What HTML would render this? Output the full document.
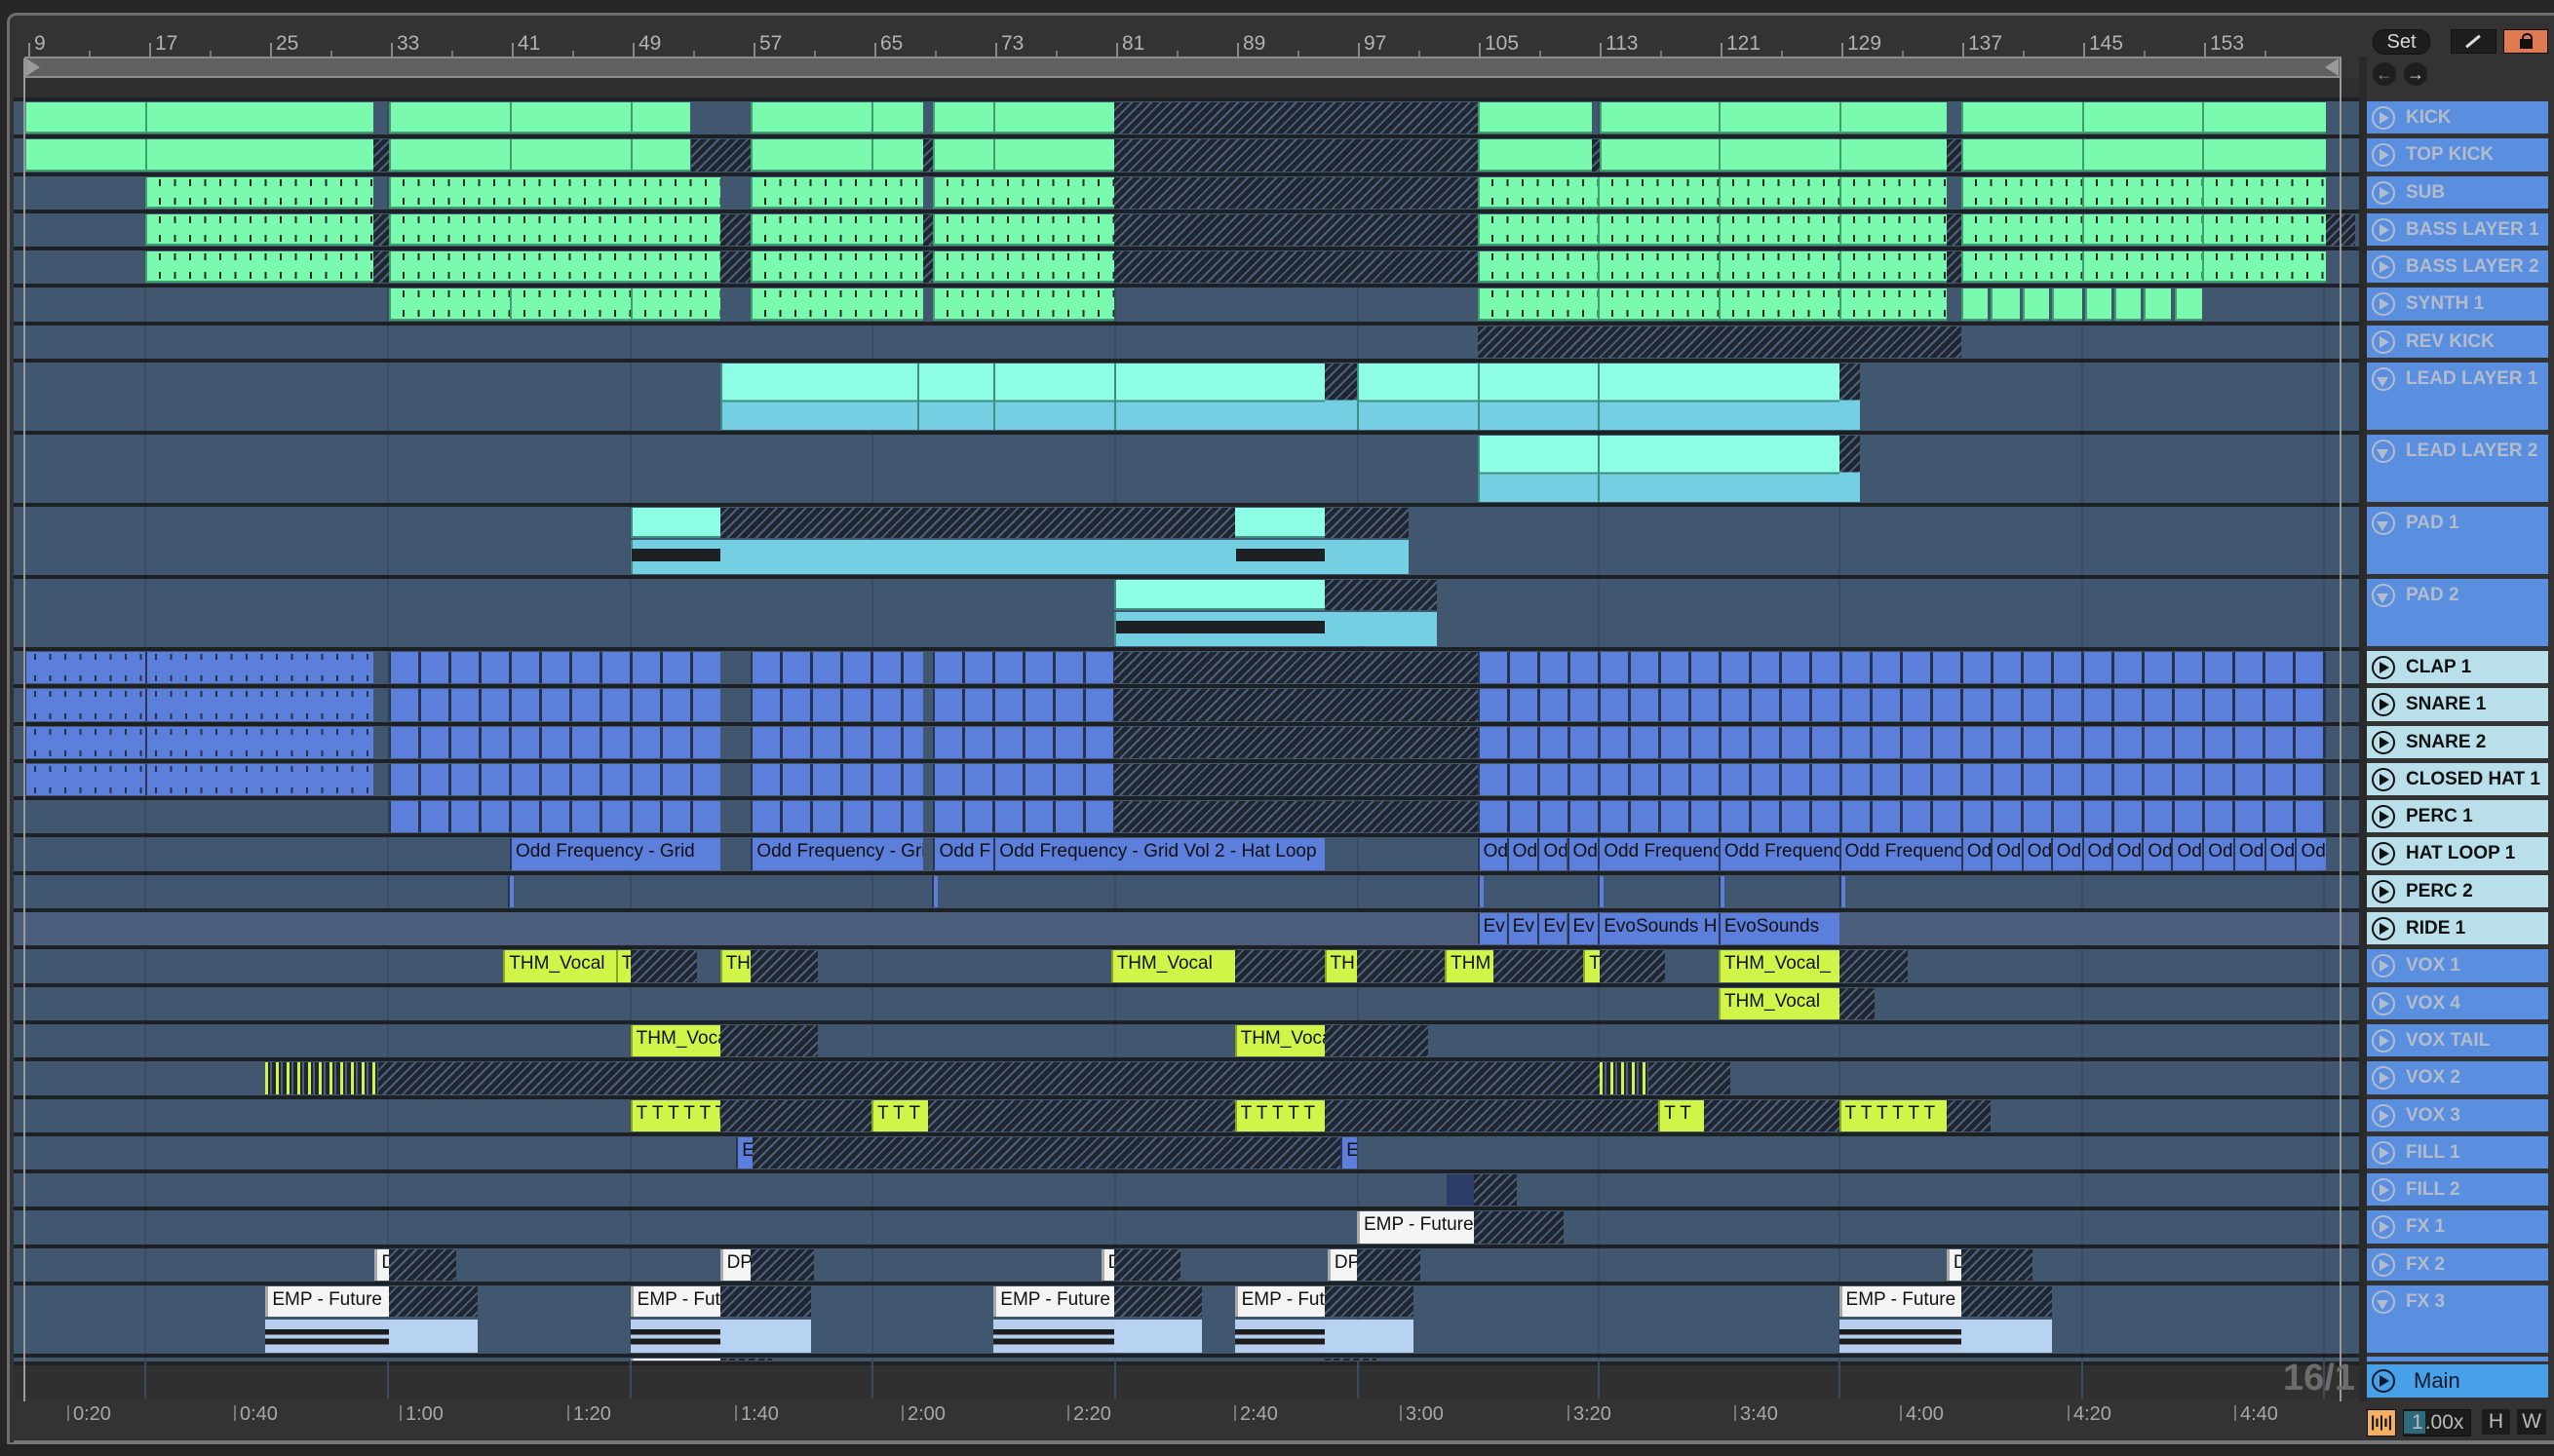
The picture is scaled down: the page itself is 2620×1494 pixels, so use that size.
<!DOCTYPE html>
<html><head><meta charset="utf-8">
<style>
*{margin:0;padding:0}
body{width:2620px;height:1494px;background:#272727;position:relative;overflow:hidden;font-family:"Liberation Sans",sans-serif}
i{font-style:normal}
.abs{position:absolute}
.frame{left:7px;top:13px;width:2640px;height:1470px;border:3px solid #6e6e6e;border-radius:10px 0 0 0;background:#333;box-sizing:border-box}
.rl{position:absolute;top:33px;font-size:21px;color:#b2b2b2;font-family:"Liberation Sans Narrow","Liberation Sans",sans-serif}
.tk{position:absolute;top:44px;width:2px;height:14px;background:#8a8a8a}
.tk2{position:absolute;top:52px;width:2px;height:6px;background:#7a7a7a}
.loop{left:25px;top:58px;width:2377px;height:22px;background:#606060;border:2px solid #8d8d8d;box-sizing:border-box}
.strip{left:25px;top:80px;width:2395px;height:20px;background:#2f2f2f}
.area{left:14px;top:100px;width:2406px;height:1297px;background:#41566f}
.r{position:absolute;left:14px;width:2406px;border-top:4px solid #1e2124;box-sizing:border-box}
.vl{position:absolute;top:100px;width:2px;height:1335px;background:#3a4b62}
.c{position:absolute;top:1px;bottom:1px;left:calc(var(--x)*1.671px - 14px);width:calc((var(--e) - var(--x))*1.671px);box-sizing:border-box;overflow:hidden;white-space:nowrap;font-size:19px;line-height:28px;color:#111;padding-left:4px;font-family:"Liberation Sans Narrow","Liberation Sans",sans-serif}
.g{background-color:#7afaae;border-left:2px solid #3f9f6f;border-bottom:2px solid #3f9f6f}
.t{background-image:repeating-linear-gradient(90deg,#1a2a20 0 2px,transparent 2px 15.5px),repeating-linear-gradient(90deg,#1a2a20 0 2px,transparent 2px 15.5px);background-size:100% 7px,100% 7px;background-position:12px 2px,12px calc(100% - 2px);background-repeat:no-repeat}
.h{background:repeating-linear-gradient(135deg,#21262e 0 5px,#4a6080 5px 7px)}
.cy{background:linear-gradient(#8dfde6 0 55%,#3f8f80 55%,#3f8f80 calc(55% + 2px),#74cfe2 calc(55% + 2px));border-left:2px solid #3f8f80}
.hcy{background:linear-gradient(transparent 0 55%,#74cfe2 55%),repeating-linear-gradient(135deg,#21262e 0 5px,#4a6080 5px 7px)}
.b{background-color:#5d7fdc;border-left:2px solid #2a3550}
.bc{background-image:repeating-linear-gradient(90deg,transparent 0 28px,#26314d 28px 31px)}
.bt{background-image:repeating-linear-gradient(90deg,#26314d 0 2px,transparent 2px 15.5px),repeating-linear-gradient(90deg,#26314d 0 2px,transparent 2px 15.5px);background-size:100% 6px,100% 6px;background-position:8px 2px,8px calc(100% - 2px);background-repeat:no-repeat}
.y{background:#d0f548;border-left:2px solid #8aa520}
.yt{background:repeating-linear-gradient(90deg,#d0f548 0 3px,#22272f 3px 5px,#4a6080 5px 7px,#22272f 7px 11px)}
.w{background:#f4f4f4;border-left:3px solid #aaa}
.hd{position:absolute;left:2428px;width:186px;box-sizing:border-box;font-weight:bold;font-size:19px;color:#b4bccc;background:#5a8fe0;padding-left:40px;line-height:34px;white-space:nowrap;overflow:hidden}
.hd::before{content:"";position:absolute;left:5px;top:5px;width:20px;height:20px;border:2px solid currentColor;border-radius:50%}
.hd::after{content:"";position:absolute;left:13px;top:11px;border-left:10px solid currentColor;border-top:6px solid transparent;border-bottom:6px solid transparent}
.hd.dn::after{left:10px;top:15px;border-top:10px solid currentColor;border-left:6px solid transparent;border-right:6px solid transparent;border-bottom:0}
.lt{background:#b8dfea;color:#111}
.tm{position:absolute;top:1440px;font-size:20px;color:#a8a8a8}
.tm::before{content:"";position:absolute;left:-6px;top:2px;width:2px;height:16px;background:#777}
</style></head><body>
<div class="abs frame"></div>
<div class="tk" style="left:29px"></div><div class="rl" style="left:35px">9</div>
<div class="tk" style="left:153px"></div><div class="rl" style="left:159px">17</div>
<div class="tk" style="left:277px"></div><div class="rl" style="left:283px">25</div>
<div class="tk" style="left:401px"></div><div class="rl" style="left:407px">33</div>
<div class="tk" style="left:525px"></div><div class="rl" style="left:531px">41</div>
<div class="tk" style="left:649px"></div><div class="rl" style="left:655px">49</div>
<div class="tk" style="left:773px"></div><div class="rl" style="left:779px">57</div>
<div class="tk" style="left:897px"></div><div class="rl" style="left:903px">65</div>
<div class="tk" style="left:1021px"></div><div class="rl" style="left:1027px">73</div>
<div class="tk" style="left:1145px"></div><div class="rl" style="left:1151px">81</div>
<div class="tk" style="left:1269px"></div><div class="rl" style="left:1275px">89</div>
<div class="tk" style="left:1393px"></div><div class="rl" style="left:1399px">97</div>
<div class="tk" style="left:1517px"></div><div class="rl" style="left:1523px">105</div>
<div class="tk" style="left:1641px"></div><div class="rl" style="left:1647px">113</div>
<div class="tk" style="left:1765px"></div><div class="rl" style="left:1771px">121</div>
<div class="tk" style="left:1889px"></div><div class="rl" style="left:1895px">129</div>
<div class="tk" style="left:2013px"></div><div class="rl" style="left:2019px">137</div>
<div class="tk" style="left:2137px"></div><div class="rl" style="left:2143px">145</div>
<div class="tk" style="left:2261px"></div><div class="rl" style="left:2267px">153</div>
<div class="tk2" style="left:91px"></div><div class="tk2" style="left:215px"></div><div class="tk2" style="left:339px"></div><div class="tk2" style="left:463px"></div><div class="tk2" style="left:587px"></div><div class="tk2" style="left:711px"></div><div class="tk2" style="left:835px"></div><div class="tk2" style="left:959px"></div><div class="tk2" style="left:1083px"></div><div class="tk2" style="left:1207px"></div><div class="tk2" style="left:1331px"></div><div class="tk2" style="left:1455px"></div><div class="tk2" style="left:1579px"></div><div class="tk2" style="left:1703px"></div><div class="tk2" style="left:1827px"></div><div class="tk2" style="left:1951px"></div><div class="tk2" style="left:2075px"></div><div class="tk2" style="left:2199px"></div><div class="tk2" style="left:2323px"></div>
<div class="abs loop"></div>
<div class="abs" style="left:27px;top:60px;border-left:14px solid #9a9a9a;border-top:9px solid transparent;border-bottom:9px solid transparent"></div>
<div class="abs" style="left:2385px;top:60px;border-right:14px solid #9a9a9a;border-top:9px solid transparent;border-bottom:9px solid transparent"></div>
<div class="abs strip"></div>
<div class="abs" style="left:2420px;top:58px;width:8px;height:1380px;background:#2a2a2a"></div>
<div class="abs area"></div>
<div class="abs" style="left:14px;top:1397px;width:2406px;height:38px;background:#303030;border-top:4px solid #222;box-sizing:border-box"></div>
<div class="vl" style="left:148px"></div><div class="vl" style="left:397px"></div><div class="vl" style="left:646px"></div><div class="vl" style="left:894px"></div><div class="vl" style="left:1143px"></div><div class="vl" style="left:1392px"></div><div class="vl" style="left:1639px"></div><div class="vl" style="left:1886px"></div><div class="vl" style="left:2135px"></div><div class="vl" style="left:2383px"></div>

<div class="r" style="top:100px;height:38px">
<i class="c g" style="--x:15;--e:89"></i><i class="c g" style="--x:89;--e:229"></i><i class="c g" style="--x:239;--e:313"></i><i class="c g" style="--x:313;--e:387"></i><i class="c g" style="--x:387;--e:424"></i><i class="c g" style="--x:461;--e:535"></i><i class="c g" style="--x:535;--e:567"></i><i class="c g" style="--x:573;--e:610"></i><i class="c g" style="--x:610;--e:684"></i><i class="c h" style="--x:684;--e:907"></i><i class="c g" style="--x:907;--e:977"></i><i class="c g" style="--x:982;--e:1055"></i><i class="c g" style="--x:1055;--e:1129"></i><i class="c g" style="--x:1129;--e:1195"></i><i class="c g" style="--x:1204;--e:1278"></i><i class="c g" style="--x:1278;--e:1352"></i><i class="c g" style="--x:1352;--e:1428"></i>
</div>
<div class="r" style="top:138px;height:39px">
<i class="c g" style="--x:15;--e:89"></i><i class="c g" style="--x:89;--e:229"></i><i class="c h" style="--x:229;--e:239"></i><i class="c g" style="--x:239;--e:313"></i><i class="c g" style="--x:313;--e:387"></i><i class="c g" style="--x:387;--e:424"></i><i class="c h" style="--x:424;--e:461"></i><i class="c g" style="--x:461;--e:535"></i><i class="c g" style="--x:535;--e:567"></i><i class="c h" style="--x:567;--e:573"></i><i class="c g" style="--x:573;--e:610"></i><i class="c g" style="--x:610;--e:684"></i><i class="c h" style="--x:684;--e:907"></i><i class="c g" style="--x:907;--e:977"></i><i class="c h" style="--x:977;--e:982"></i><i class="c g" style="--x:982;--e:1055"></i><i class="c g" style="--x:1055;--e:1129"></i><i class="c g" style="--x:1129;--e:1195"></i><i class="c h" style="--x:1195;--e:1204"></i><i class="c g" style="--x:1204;--e:1278"></i><i class="c g" style="--x:1278;--e:1352"></i><i class="c g" style="--x:1352;--e:1428"></i>
</div>
<div class="r" style="top:177px;height:38px">
<i class="c g t" style="--x:89;--e:229"></i><i class="c g t" style="--x:239;--e:442"></i><i class="c g t" style="--x:461;--e:567"></i><i class="c g t" style="--x:573;--e:684"></i><i class="c h" style="--x:684;--e:907"></i><i class="c g t" style="--x:907;--e:981"></i><i class="c g t" style="--x:981;--e:1055"></i><i class="c g t" style="--x:1055;--e:1129"></i><i class="c g t" style="--x:1129;--e:1195"></i><i class="c g t" style="--x:1204;--e:1278"></i><i class="c g t" style="--x:1278;--e:1352"></i><i class="c g t" style="--x:1352;--e:1428"></i>
</div>
<div class="r" style="top:215px;height:38px">
<i class="c g t" style="--x:89;--e:229"></i><i class="c h" style="--x:229;--e:239"></i><i class="c g t" style="--x:239;--e:442"></i><i class="c h" style="--x:442;--e:461"></i><i class="c g t" style="--x:461;--e:567"></i><i class="c h" style="--x:567;--e:573"></i><i class="c g t" style="--x:573;--e:684"></i><i class="c h" style="--x:684;--e:907"></i><i class="c g t" style="--x:907;--e:981"></i><i class="c g t" style="--x:981;--e:1055"></i><i class="c g t" style="--x:1055;--e:1129"></i><i class="c g t" style="--x:1129;--e:1195"></i><i class="c h" style="--x:1195;--e:1204"></i><i class="c g t" style="--x:1204;--e:1278"></i><i class="c g t" style="--x:1278;--e:1352"></i><i class="c g t" style="--x:1352;--e:1428"></i><i class="c h" style="--x:1428;--e:1446"></i>
</div>
<div class="r" style="top:253px;height:38px">
<i class="c g t" style="--x:89;--e:229"></i><i class="c h" style="--x:229;--e:239"></i><i class="c g t" style="--x:239;--e:442"></i><i class="c h" style="--x:442;--e:461"></i><i class="c g t" style="--x:461;--e:567"></i><i class="c h" style="--x:567;--e:573"></i><i class="c g t" style="--x:573;--e:684"></i><i class="c h" style="--x:684;--e:907"></i><i class="c g t" style="--x:907;--e:981"></i><i class="c g t" style="--x:981;--e:1055"></i><i class="c g t" style="--x:1055;--e:1129"></i><i class="c g t" style="--x:1129;--e:1195"></i><i class="c h" style="--x:1195;--e:1204"></i><i class="c g t" style="--x:1204;--e:1278"></i><i class="c g t" style="--x:1278;--e:1352"></i><i class="c g t" style="--x:1352;--e:1428"></i>
</div>
<div class="r" style="top:291px;height:39px">
<i class="c g t" style="--x:239;--e:313"></i><i class="c g t" style="--x:313;--e:387"></i><i class="c g t" style="--x:387;--e:442"></i><i class="c g t" style="--x:461;--e:567"></i><i class="c g t" style="--x:573;--e:684"></i><i class="c g t" style="--x:907;--e:981"></i><i class="c g t" style="--x:981;--e:1055"></i><i class="c g t" style="--x:1055;--e:1129"></i><i class="c g t" style="--x:1129;--e:1195"></i><i class="c g" style="--x:1204;--e:1220"></i><i class="c g" style="--x:1222;--e:1240"></i><i class="c g" style="--x:1242;--e:1258"></i><i class="c g" style="--x:1260;--e:1278"></i><i class="c g" style="--x:1280;--e:1296"></i><i class="c g" style="--x:1298;--e:1314"></i><i class="c g" style="--x:1316;--e:1333"></i><i class="c g" style="--x:1335;--e:1352"></i>
</div>
<div class="r" style="top:330px;height:38px"><i class="c h" style="--x:907;--e:1204"></i></div>
<div class="r" style="top:368px;height:74px">
<i class="c cy" style="--x:442;--e:563"></i><i class="c cy" style="--x:563;--e:610"></i><i class="c cy" style="--x:610;--e:684"></i><i class="c cy" style="--x:684;--e:813"></i><i class="c hcy" style="--x:813;--e:833"></i><i class="c cy" style="--x:833;--e:907"></i><i class="c cy" style="--x:907;--e:981"></i><i class="c cy" style="--x:981;--e:1129"></i><i class="c hcy" style="--x:1129;--e:1142"></i>
</div>
<div class="r" style="top:442px;height:74px">
<i class="c cy" style="--x:907;--e:981"></i><i class="c cy" style="--x:981;--e:1129"></i><i class="c hcy" style="--x:1129;--e:1142"></i>
</div>
<div class="r" style="top:516px;height:74px">
<i class="c" style="--x:387;--e:865;top:34px;background:#74cfe2;border-left:2px solid #3f8f80"></i>
<i class="c" style="--x:387;--e:442;bottom:38px;background:#8dfde6;border-left:2px solid #3f8f80;border-bottom:2px solid #3f8f80"></i>
<i class="c h" style="--x:442;--e:758;bottom:38px"></i>
<i class="c" style="--x:758;--e:813;bottom:38px;background:#8dfde6;border-bottom:2px solid #3f8f80"></i>
<i class="c h" style="--x:813;--e:865;bottom:38px"></i>
<i class="c" style="--x:388;--e:442;top:43px;bottom:14px;background:#1d2124"></i>
<i class="c" style="--x:759;--e:813;top:43px;bottom:14px;background:#1d2124"></i>
</div>
<div class="r" style="top:590px;height:74px">
<i class="c" style="--x:684;--e:882;top:34px;background:#74cfe2;border-left:2px solid #3f8f80"></i>
<i class="c" style="--x:684;--e:813;bottom:38px;background:#8dfde6;border-left:2px solid #3f8f80;border-bottom:2px solid #3f8f80"></i>
<i class="c h" style="--x:813;--e:882;bottom:38px"></i>
<i class="c" style="--x:685;--e:813;top:43px;bottom:14px;background:#1d2124"></i>
</div>
<div class="r" style="top:664px;height:38px">
<i class="c b bt" style="--x:15;--e:89"></i><i class="c b bt" style="--x:89;--e:229"></i><i class="c b bc" style="--x:239;--e:442"></i><i class="c b bc" style="--x:461;--e:567"></i><i class="c b bc" style="--x:573;--e:684"></i><i class="c h" style="--x:684;--e:907"></i><i class="c b bc" style="--x:907;--e:1428"></i>
</div>
<div class="r" style="top:702px;height:39px">
<i class="c b bt" style="--x:15;--e:89"></i><i class="c b bt" style="--x:89;--e:229"></i><i class="c b bc" style="--x:239;--e:442"></i><i class="c b bc" style="--x:461;--e:567"></i><i class="c b bc" style="--x:573;--e:684"></i><i class="c h" style="--x:684;--e:907"></i><i class="c b bc" style="--x:907;--e:1428"></i>
</div>
<div class="r" style="top:741px;height:38px">
<i class="c b bt" style="--x:15;--e:89"></i><i class="c b bt" style="--x:89;--e:229"></i><i class="c b bc" style="--x:239;--e:442"></i><i class="c b bc" style="--x:461;--e:567"></i><i class="c b bc" style="--x:573;--e:684"></i><i class="c h" style="--x:684;--e:907"></i><i class="c b bc" style="--x:907;--e:1428"></i>
</div>
<div class="r" style="top:779px;height:38px">
<i class="c b bt" style="--x:15;--e:89"></i><i class="c b bt" style="--x:89;--e:229"></i><i class="c b bc" style="--x:239;--e:442"></i><i class="c b bc" style="--x:461;--e:567"></i><i class="c b bc" style="--x:573;--e:684"></i><i class="c h" style="--x:684;--e:907"></i><i class="c b bc" style="--x:907;--e:1428"></i>
</div>
<div class="r" style="top:817px;height:38px">
<i class="c b bc" style="--x:239;--e:442"></i><i class="c b bc" style="--x:461;--e:567"></i><i class="c b bc" style="--x:573;--e:684"></i><i class="c h" style="--x:684;--e:907"></i><i class="c b bc" style="--x:907;--e:1428"></i>
</div>
<div class="r" style="top:855px;height:39px">
<i class="c b" style="--x:313;--e:442">Odd Frequency - Grid</i><i class="c b" style="--x:461;--e:567">Odd Frequency - Grid</i><i class="c b" style="--x:573;--e:610">Odd F</i><i class="c b" style="--x:610;--e:813">Odd Frequency - Grid Vol 2 - Hat Loop</i>
<i class="c b" style="--x:907;--e:925">Od</i><i class="c b" style="--x:925;--e:944">Od</i><i class="c b" style="--x:944;--e:962">Od</i><i class="c b" style="--x:962;--e:981">Od</i>
<i class="c b" style="--x:981;--e:1055">Odd Frequency</i><i class="c b" style="--x:1055;--e:1129">Odd Frequency</i><i class="c b" style="--x:1129;--e:1204">Odd Frequency</i>
<i class="c b" style="--x:1204;--e:1222">Od</i><i class="c b" style="--x:1222;--e:1241">Od</i><i class="c b" style="--x:1241;--e:1259">Od</i><i class="c b" style="--x:1259;--e:1278">Od</i><i class="c b" style="--x:1278;--e:1296">Od</i><i class="c b" style="--x:1296;--e:1315">Od</i><i class="c b" style="--x:1315;--e:1333">Od</i><i class="c b" style="--x:1333;--e:1352">Od</i><i class="c b" style="--x:1352;--e:1371">Od</i><i class="c b" style="--x:1371;--e:1390">Od</i><i class="c b" style="--x:1390;--e:1409">Od</i><i class="c b" style="--x:1409;--e:1428">Od</i>
</div>
<div class="r" style="top:894px;height:38px">
<i class="c b" style="--x:312;--e:314"></i><i class="c b" style="--x:572;--e:574"></i><i class="c b" style="--x:907;--e:909"></i><i class="c b" style="--x:981;--e:983"></i><i class="c b" style="--x:1055;--e:1057"></i><i class="c b" style="--x:1129;--e:1131"></i>
</div>
<div class="r" style="top:932px;height:38px;background:#4a5e7b">
<i class="c b" style="--x:907;--e:925">Ev</i><i class="c b" style="--x:925;--e:944">Ev</i><i class="c b" style="--x:944;--e:962">Ev</i><i class="c b" style="--x:962;--e:981">Ev</i><i class="c b" style="--x:981;--e:1055">EvoSounds H</i><i class="c b" style="--x:1055;--e:1129">EvoSounds</i>
</div>
<div class="r" style="top:970px;height:39px">
<i class="c y" style="--x:309;--e:378">THM_Vocal</i><i class="c y" style="--x:378;--e:387">T</i><i class="c h" style="--x:387;--e:428"></i><i class="c y" style="--x:442;--e:461">TH</i><i class="c h" style="--x:461;--e:502"></i><i class="c y" style="--x:682;--e:758">THM_Vocal</i><i class="c h" style="--x:758;--e:813"></i><i class="c y" style="--x:813;--e:833">TH</i><i class="c h" style="--x:833;--e:887"></i><i class="c y" style="--x:887;--e:917">THM</i><i class="c h" style="--x:917;--e:972"></i><i class="c y" style="--x:972;--e:982">T</i><i class="c h" style="--x:982;--e:1022"></i><i class="c y" style="--x:1055;--e:1129">THM_Vocal_</i><i class="c h" style="--x:1129;--e:1171"></i>
</div>
<div class="r" style="top:1009px;height:38px"><i class="c y" style="--x:1055;--e:1129">THM_Vocal</i><i class="c h" style="--x:1129;--e:1151"></i></div>
<div class="r" style="top:1047px;height:38px"><i class="c y" style="--x:387;--e:442">THM_Vocal</i><i class="c h" style="--x:442;--e:502"></i><i class="c y" style="--x:758;--e:813">THM_Vocal</i><i class="c h" style="--x:813;--e:877"></i></div>
<div class="r" style="top:1085px;height:39px"><i class="c yt" style="--x:163;--e:232"></i><i class="c h" style="--x:232;--e:982"></i><i class="c yt" style="--x:982;--e:1012"></i><i class="c h" style="--x:1012;--e:1062"></i></div>
<div class="r" style="top:1124px;height:38px"><i class="c y" style="--x:387;--e:442">T T T T T T</i><i class="c h" style="--x:442;--e:535"></i><i class="c y" style="--x:535;--e:570">T T T</i><i class="c h" style="--x:570;--e:758"></i><i class="c y" style="--x:758;--e:813">T T T T T</i><i class="c h" style="--x:813;--e:1018"></i><i class="c y" style="--x:1018;--e:1046">T T</i><i class="c h" style="--x:1046;--e:1129"></i><i class="c y" style="--x:1129;--e:1195">T T T T T T</i><i class="c h" style="--x:1195;--e:1222"></i></div>
<div class="r" style="top:1162px;height:38px"><i class="c b" style="--x:452;--e:462">E</i><i class="c h" style="--x:462;--e:823"></i><i class="c b" style="--x:823;--e:833">E</i></div>
<div class="r" style="top:1200px;height:38px"><i class="c" style="--x:888;--e:905;background:#2d3c66"></i><i class="c h" style="--x:905;--e:931"></i></div>
<div class="r" style="top:1238px;height:39px"><i class="c w" style="--x:833;--e:905">EMP - Future</i><i class="c h" style="--x:905;--e:960"></i></div>
<div class="r" style="top:1277px;height:38px"><i class="c w" style="--x:230;--e:239">D</i><i class="c h" style="--x:239;--e:280"></i><i class="c w" style="--x:442;--e:461">DP</i><i class="c h" style="--x:461;--e:500"></i><i class="c w" style="--x:676;--e:684">D</i><i class="c h" style="--x:684;--e:725"></i><i class="c w" style="--x:815;--e:833">DP</i><i class="c h" style="--x:833;--e:872"></i><i class="c w" style="--x:1195;--e:1204">D</i><i class="c h" style="--x:1204;--e:1248"></i></div>
<div class="r" style="top:1315px;height:74px">
<i class="c w" style="--x:163;--e:239;bottom:38px">EMP - Future</i><i class="c h" style="--x:239;--e:293;bottom:38px"></i><i class="c" style="--x:163;--e:239;top:35px;background:linear-gradient(#b7cfee 0 30%,#1c1c1c 30% 45%,#b7cfee 45% 58%,#1c1c1c 58% 75%,#b7cfee 75%)"></i><i class="c" style="--x:239;--e:293;top:35px;background:#b8d2f2"></i>
<i class="c w" style="--x:387;--e:442;bottom:38px">EMP - Future</i><i class="c h" style="--x:442;--e:498;bottom:38px"></i><i class="c" style="--x:387;--e:442;top:35px;background:linear-gradient(#b7cfee 0 30%,#1c1c1c 30% 45%,#b7cfee 45% 58%,#1c1c1c 58% 75%,#b7cfee 75%)"></i><i class="c" style="--x:442;--e:498;top:35px;background:#b8d2f2"></i>
<i class="c w" style="--x:610;--e:684;bottom:38px">EMP - Future</i><i class="c h" style="--x:684;--e:738;bottom:38px"></i><i class="c" style="--x:610;--e:684;top:35px;background:linear-gradient(#b7cfee 0 30%,#1c1c1c 30% 45%,#b7cfee 45% 58%,#1c1c1c 58% 75%,#b7cfee 75%)"></i><i class="c" style="--x:684;--e:738;top:35px;background:#b8d2f2"></i>
<i class="c w" style="--x:758;--e:813;bottom:38px">EMP - Future</i><i class="c h" style="--x:813;--e:868;bottom:38px"></i><i class="c" style="--x:758;--e:813;top:35px;background:linear-gradient(#b7cfee 0 30%,#1c1c1c 30% 45%,#b7cfee 45% 58%,#1c1c1c 58% 75%,#b7cfee 75%)"></i><i class="c" style="--x:813;--e:868;top:35px;background:#b8d2f2"></i>
<i class="c w" style="--x:1129;--e:1204;bottom:38px">EMP - Future</i><i class="c h" style="--x:1204;--e:1260;bottom:38px"></i><i class="c" style="--x:1129;--e:1204;top:35px;background:linear-gradient(#b7cfee 0 30%,#1c1c1c 30% 45%,#b7cfee 45% 58%,#1c1c1c 58% 75%,#b7cfee 75%)"></i><i class="c" style="--x:1204;--e:1260;top:35px;background:#b8d2f2"></i>
</div>
<div class="r" style="top:1389px;height:8px"><i class="c h" style="--x:442;--e:474"></i><i class="c h" style="--x:813;--e:845"></i><i class="c w" style="--x:387;--e:442;padding:0"></i></div>

<div class="abs" style="left:24px;top:60px;width:2px;height:1378px;background:#9a9a9a"></div>
<div class="abs" style="left:2400px;top:60px;width:2px;height:1378px;background:#9a9a9a"></div>

<div class="abs" style="left:2300px;top:1393px;width:116px;text-align:right;font-size:38px;font-weight:bold;color:#6c6c6c">16/1</div>

<div class="hd" style="top:104px;height:33px">KICK</div>
<div class="hd" style="top:142px;height:34px">TOP KICK</div>
<div class="hd" style="top:181px;height:33px">SUB</div>
<div class="hd" style="top:219px;height:33px">BASS LAYER 1</div>
<div class="hd" style="top:257px;height:33px">BASS LAYER 2</div>
<div class="hd" style="top:295px;height:34px">SYNTH 1</div>
<div class="hd" style="top:334px;height:33px">REV KICK</div>
<div class="hd dn" style="top:372px;height:69px">LEAD LAYER 1</div>
<div class="hd dn" style="top:446px;height:69px">LEAD LAYER 2</div>
<div class="hd dn" style="top:520px;height:69px">PAD 1</div>
<div class="hd dn" style="top:594px;height:69px">PAD 2</div>
<div class="hd lt" style="top:668px;height:33px">CLAP 1</div>
<div class="hd lt" style="top:706px;height:34px">SNARE 1</div>
<div class="hd lt" style="top:745px;height:33px">SNARE 2</div>
<div class="hd lt" style="top:783px;height:33px">CLOSED HAT 1</div>
<div class="hd lt" style="top:821px;height:33px">PERC 1</div>
<div class="hd lt" style="top:859px;height:34px">HAT LOOP 1</div>
<div class="hd lt" style="top:898px;height:33px">PERC 2</div>
<div class="hd lt" style="top:936px;height:33px">RIDE 1</div>
<div class="hd" style="top:974px;height:34px">VOX 1</div>
<div class="hd" style="top:1013px;height:33px">VOX 4</div>
<div class="hd" style="top:1051px;height:33px">VOX TAIL</div>
<div class="hd" style="top:1089px;height:34px">VOX 2</div>
<div class="hd" style="top:1128px;height:33px">VOX 3</div>
<div class="hd" style="top:1166px;height:33px">FILL 1</div>
<div class="hd" style="top:1204px;height:33px">FILL 2</div>
<div class="hd" style="top:1242px;height:34px">FX 1</div>
<div class="hd" style="top:1281px;height:33px">FX 2</div>
<div class="hd dn" style="top:1319px;height:69px">FX 3</div>
<div class="abs" style="left:2428px;top:1392px;width:186px;height:5px;background:#5a8fe0"></div>
<div class="hd" style="top:1400px;height:34px;background:#48a0e8;color:#0d1a2a;font-weight:normal;font-size:22px;padding-left:48px">Main</div>

<div class="abs" style="left:2434px;top:30px;width:57px;height:24px;border-radius:12px;background:#1e1e1e;border:1px solid #111;color:#d8d8d8;font-size:20px;text-align:center;line-height:24px">Set</div>
<div class="abs" style="left:2514px;top:30px;width:45px;height:23px;background:#1e1e1e;border:1px solid #111"><div class="abs" style="left:13px;top:10px;width:18px;height:3px;background:#ddd;transform:rotate(-40deg)"></div></div>
<div class="abs" style="left:2568px;top:30px;width:44px;height:23px;background:#e07a52;border:1px solid #111"><div class="abs" style="left:16px;top:9px;width:13px;height:10px;background:#111"></div><div class="abs" style="left:18px;top:3px;width:7px;height:8px;border:2px solid #111;border-bottom:0;border-radius:5px 5px 0 0"></div></div>
<div class="abs" style="left:2434px;top:64px;width:24px;height:24px;border-radius:50%;background:#1e1e1e;color:#888;font-size:18px;text-align:center;line-height:24px">←</div>
<div class="abs" style="left:2466px;top:64px;width:24px;height:24px;border-radius:50%;background:#1e1e1e;color:#ddd;font-size:18px;text-align:center;line-height:24px">→</div>

<div class="abs" style="left:14px;top:1478px;width:2606px;height:4px;background:#777"></div>
<div class="abs" style="left:0;top:1482px;width:2620px;height:12px;background:#242424"></div>
<div class="tm" style="left:75px">0:20</div><div class="tm" style="left:246px">0:40</div><div class="tm" style="left:416px">1:00</div><div class="tm" style="left:588px">1:20</div><div class="tm" style="left:760px">1:40</div><div class="tm" style="left:931px">2:00</div><div class="tm" style="left:1101px">2:20</div><div class="tm" style="left:1272px">2:40</div><div class="tm" style="left:1442px">3:00</div><div class="tm" style="left:1614px">3:20</div><div class="tm" style="left:1785px">3:40</div><div class="tm" style="left:1955px">4:00</div><div class="tm" style="left:2127px">4:20</div><div class="tm" style="left:2298px">4:40</div>
<div class="abs" style="left:2428px;top:1446px;width:28px;height:26px;background:#f4b060;border:1px solid #111;color:#111;font-size:16px;text-align:center;line-height:26px;font-weight:bold">|ı|ı|</div>
<div class="abs" style="left:2465px;top:1446px;width:68px;height:26px;background:#1c1c1c;border:1px solid #111;color:#bbb;font-size:21px;line-height:26px"><span style="background:#2c6a7c;padding:0 2px 0 8px">1</span>.00x</div>
<div class="abs" style="left:2546px;top:1446px;width:29px;height:26px;background:#1c1c1c;color:#bbb;font-size:21px;text-align:center;line-height:26px">H</div>
<div class="abs" style="left:2582px;top:1446px;width:30px;height:26px;background:#1c1c1c;color:#bbb;font-size:21px;text-align:center;line-height:26px">W</div>
</body></html>
